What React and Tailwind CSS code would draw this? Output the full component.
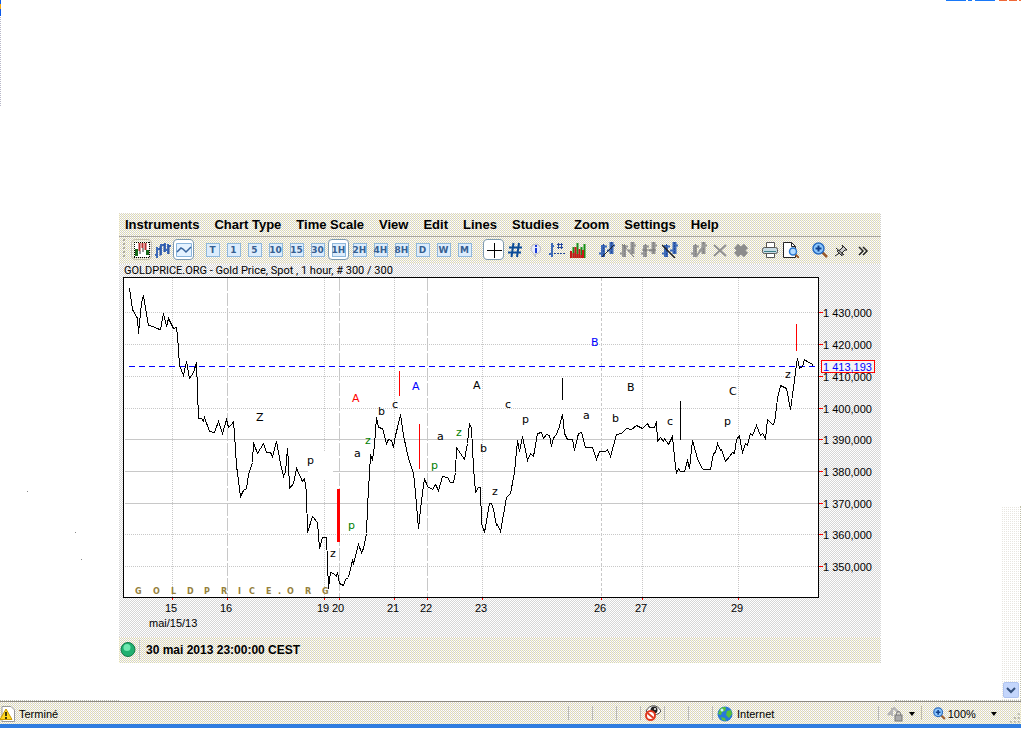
import { useState } from "react";
import clsx from "clsx";

const MENUS = ["Instruments", "Chart Type", "Time Scale", "View", "Edit", "Lines", "Studies", "Zoom", "Settings", "Help"];
const SCALES = ["T", "1", "5", "10", "15", "30", "1H", "2H", "4H", "8H", "D", "W", "M"];

const BEIGE = "bg-[conic-gradient(#ffffff_0_25%,#d0d0cc_0_50%,#ffffd8_0_75%,#dcd4c8_0)] bg-[length:2px_2px]";

const PRICES = [
  { label: "1 430,000", y: 312 },
  { label: "1 420,000", y: 344 },
  { label: "1 410,000", y: 376 },
  { label: "1 400,000", y: 408 },
  { label: "1 390,000", y: 439, solid: true },
  { label: "1 380,000", y: 471, solid: true },
  { label: "1 370,000", y: 503, solid: true },
  { label: "1 360,000", y: 534 },
  { label: "1 350,000", y: 566 },
];

const DAYS = [
  { label: "15", x: 172, dash: "1 1" },
  { label: "16", x: 227, dash: "13 2" },
  { label: "19", x: 324, dash: "1 1" },
  { label: "20", x: 339, dash: "13 2" },
  { label: "21", x: 394, dash: "1 1" },
  { label: "22", x: 427, dash: "13 2" },
  { label: "23", x: 482, dash: "1 1" },
  { label: "26", x: 601, dash: "3 2" },
  { label: "27", x: 642, dash: "1 1" },
  { label: "29", x: 738, dash: "1 1" },
];

// wave count annotations: text, x, baseline, colour
const WAVES = [
  ["Z", 256, 421, "#000"],
  ["p", 307, 464, "#000"],
  ["z", 330, 557, "#000"],
  ["p", 348, 529, "#008000"],
  ["A", 352, 402, "#f00"],
  ["z", 365, 444, "#008000"],
  ["a", 354, 457, "#000"],
  ["b", 378, 415, "#000"],
  ["c", 392, 408, "#000"],
  ["A", 412, 390, "#00f"],
  ["a", 437, 440, "#000"],
  ["p", 431, 469, "#008000"],
  ["z", 456, 436, "#008000"],
  ["A", 473, 389, "#000"],
  ["b", 480, 452, "#000"],
  ["z", 492, 495, "#000"],
  ["c", 505, 408, "#000"],
  ["p", 522, 423, "#000"],
  ["a", 583, 419, "#000"],
  ["B", 591, 346, "#00f"],
  ["b", 612, 422, "#000"],
  ["B", 627, 391, "#000"],
  ["c", 667, 425, "#000"],
  ["p", 724, 425, "#000"],
  ["C", 729, 395, "#000"],
  ["z", 785, 378, "#000"],
];

const LINE =
  "129,288 132,309 137,318 138,333 141,302 143,295 146,313 148,325 153,326 156,328 160,329 163,313 166,326 168,318 173,328 176,327 177,335 179,365 183,375 186,361 189,378 193,372 196,362 198,418 201,418 203,421 204,417 209,431 214,432 218,421 222,433 226,419 228,427 231,424 233,421 234,433 236,465 240,496 243,490 246,488 248,474 252,462 253,442 257,453 263,443 266,452 270,452 272,456 276,441 280,463 283,476 285,471 287,448 288,463 289,488 293,483 296,468 302,481 304,478 306,492 307,532 312,516 317,522 319,548 322,537 326,537 328,588 330,572 333,573 336,576 337,572 339,583 343,585 345,579 348,577 352,560 353,563 358,544 361,552 363,548 366,533 367,507 369,472 370,455 372,459 374,445 376,417 378,427 382,428 386,443 388,439 391,440 393,447 395,435 397,427 400,414 403,435 408,458 413,473 415,492 418,528 421,500 424,478 427,486 432,489 435,484 438,490 442,476 447,477 450,482 453,482 455,472 456,447 460,453 464,459 467,443 469,423 471,428 473,467 475,492 478,487 480,487 481,523 484,532 489,503 491,503 493,509 496,525 497,524 500,531 506,497 510,493 514,472 517,440 519,451 522,436 525,450 527,460 530,453 533,456 537,433 541,432 543,438 546,434 549,435 551,446 553,437 555,436 559,426 562,414 564,433 567,439 572,439 574,450 578,433 581,432 585,447 592,447 596,459 599,451 605,451 607,449 610,456 616,434 621,433 626,428 631,429 636,425 642,428 647,423 649,427 654,427 656,421 657,441 660,437 663,441 664,438 668,444 672,436 674,457 676,473 678,468 680,471 684,471 687,460 689,468 692,440 697,458 701,467 703,469 710,469 713,453 715,452 717,443 720,450 721,449 725,461 729,456 732,452 734,453 736,439 739,435 741,447 742,452 745,443 747,445 750,433 752,435 756,425 760,435 762,433 765,438 767,419 772,424 774,423 777,398 780,385 786,388 790,409 794,380 796,364 797,358 799,368 802,366 804,359 808,362 811,363 813,366";

function Icon({ children, size = 16 }) {
  return (
    <svg width={size} height={size} viewBox="0 0 16 16" fill="none" aria-hidden="true">
      {children}
    </svg>
  );
}

function Tool({ label, active, boxed, onClick, children }) {
  return (
    <button
      type="button"
      aria-label={label}
      onClick={onClick}
      className={clsx(
        "flex h-[21px] w-[21px] items-center justify-center rounded border",
        active ? "border-[#7d9ab0] bg-white" : boxed ? "border-[#c4beac]" : "border-transparent"
      )}
    >
      {children}
    </button>
  );
}

function Bars({ color, dark, children }) {
  return (
    <Icon>
      <path d="M4 3v12M12.500 0v12" stroke={color} strokeWidth="4" />
      <path d="M0 11.500h3M5 4.500h3M8 8.500h3M13 3.500h3" stroke={color} strokeWidth="2" />
      <path d="M4.500 2v13M12.500 0v12" stroke={dark} strokeDasharray="2 1" />
      {children}
    </Icon>
  );
}

const BLUE = "#3c6ab8";
const NAVY = "#24489a";
const GRAY = "#969696";
const DIM = "#828282";

function Magnifier({ size }) {
  return (
    <Icon size={size}>
      <path d="M10 10l5 5" stroke="#9a5a2a" strokeWidth="2.500" />
      <circle cx="6.500" cy="6.500" r="5.500" fill="#8cc8ff" stroke="#2a6cc0" strokeWidth="1.500" />
      <path d="M6.500 3.500v6M3.500 6.500h6" stroke="#10408c" strokeWidth="2" />
    </Icon>
  );
}

function Toolbar() {
  const [scale, setScale] = useState("1H");
  return (
    <div className={`flex h-[27px] items-center gap-2 pb-[2px] pl-1 ${BEIGE}`}>
      <div className="flex">
        <span className="mr-[6px] h-[18px] border-l-2 border-dotted border-[#b0aea0]" />
        <Tool label="Candles" boxed>
          <Icon>
            <path d="M1 1h14v14H1z" fill="#fff" />
            <path d="M0 .5h16M0 15.500h16M.5 0v16M15.500 0v16" stroke="#000" strokeDasharray="1 1" />
            <path d="M2.500 7v7M13.500 8v5" stroke="#186818" strokeWidth="3" />
            <path d="M5.500 1v8M8.500 1v5M11.500 1v7" stroke="#b83030" strokeWidth="2" />
            <path d="M6 9v3M9 6v4" stroke="#333" />
          </Icon>
        </Tool>
        <Tool label="OHLC bars">
          <Icon>
            <path d="M2 5v11M0 13h2M2 7h3M6 2v11M6 3h4M10 1v9M10 8h2M13 2v10M13 4h3" stroke={BLUE} strokeWidth="2" />
            <path d="M5 4v10M9 2v8M14 3v9" stroke={NAVY} />
          </Icon>
        </Tool>
        <Tool label="Line" active>
          <Icon>
            <path d="M.5 1.500h15v13H.5z" fill="#e4f2ff" stroke="#88b4dc" />
            <path d="M1 10l4-4 2 1 3 3 5-5" stroke="#36639c" strokeWidth="1.500" />
          </Icon>
        </Tool>
      </div>
      <div className="flex">
        {SCALES.map((s) => (
          <Tool key={s} label={`Scale ${s}`} active={scale === s} onClick={() => setScale(s)}>
            <span className="flex h-[14px] w-[14px] items-center justify-center border border-[#8fb8dc] bg-[#dcecfc] font-['DejaVu_Sans',sans-serif] text-[9px] leading-3 font-bold text-[#365f92]">
              {s}
            </span>
          </Tool>
        ))}
      </div>
      <div className="flex">
        <Tool label="Crosshair" active>
          <Icon>
            <path d="M8.500 1v15M1 8.500h15" stroke="#000" shapeRendering="crispEdges" />
          </Icon>
        </Tool>
        <Tool label="Grid">
          <Icon>
            <path d="M6.500 1l-2 14M12 1l-2 14M2 5.500h13M1 10.500h13" stroke="#0c4c98" strokeWidth="2" />
          </Icon>
        </Tool>
        <Tool label="Info">
          <Icon>
            <path d="M8 2a5 5 0 1 1-1 10l1 3-3-4A5 5 0 0 1 8 2z" fill="#e8ecf8" stroke="#b8b8c0" />
            <path d="M8 3v2M8 6v4M7 10h2" stroke="#1838d8" strokeWidth="2" />
          </Icon>
        </Tool>
        <Tool label="Levels">
          <Icon>
            <path d="M3 1v14M0 12h3M3 4h2" stroke={BLUE} strokeWidth="2" />
            <path d="M9.500 1v6M12.500 1v6M8 2.500h6M8 5.500h6" stroke={NAVY} />
            <path d="M5 11.500h11" stroke={NAVY} strokeDasharray="2 1" />
          </Icon>
        </Tool>
        <Tool label="Volume">
          <Icon>
            <path d="M3.500 5v11M7.500 1v15M11.500 5v11M14.500 2v14" stroke="#189018" strokeWidth="2" />
            <path d="M1 9v7M5.500 5v11M9.500 7v9M13 8v8" stroke="#c81818" strokeWidth="2" />
            <path d="M3.500 11v5M7.500 12v4M11.500 13v3" stroke="#c81818" strokeWidth="2" />
          </Icon>
        </Tool>
      </div>
      <div className="flex">
        <Tool label="Trend line">
          <Bars color={BLUE} dark={NAVY}>
            <path d="M3 15L15 3" stroke="#222" />
          </Bars>
        </Tool>
        <Tool label="Move line">
          <Bars color={GRAY} dark={DIM}>
            <path d="M2 2l12 13" stroke="#777" />
          </Bars>
        </Tool>
        <Tool label="Horizontal line">
          <Bars color={GRAY} dark={DIM}>
            <path d="M1 8h14" stroke="#777" />
          </Bars>
        </Tool>
        <Tool label="Remove line">
          <Bars color={BLUE} dark={NAVY}>
            <path d="M0 3l13 13" stroke="#222" strokeWidth="1.500" />
          </Bars>
        </Tool>
      </div>
      <div className="flex">
        <Tool label="Edit line">
          <Bars color={GRAY} dark={DIM}>
            <path d="M5 15l8-12" stroke="#999" strokeWidth="2" />
          </Bars>
        </Tool>
        <Tool label="Delete">
          <Icon>
            <path d="M2 3l12 11M14 3L2 14" stroke="#909090" strokeWidth="2" />
          </Icon>
        </Tool>
        <Tool label="Delete all">
          <Icon>
            <path d="M3 4l10 9M13 4L3 13" stroke="#8c8c8c" strokeWidth="6" />
          </Icon>
        </Tool>
      </div>
      <div className="flex">
        <Tool label="Print">
          <Icon>
            <path d="M4.500.5h8v5h-8z" fill="#fff" stroke="#555" />
            <rect x=".5" y="5.500" width="15" height="6" rx="2" fill="#c8dce4" stroke="#555" />
            <path d="M2 9.500h12" stroke="#3c8088" />
            <path d="M4.500 11.500h8v4h-8z" fill="#fff" stroke="#555" />
          </Icon>
        </Tool>
        <Tool label="Print preview">
          <Icon>
            <path d="M.5.5h8l4 4v11H.5z" fill="#fff" stroke="#222" />
            <path d="M8.500.5v4h4" stroke="#222" />
            <path d="M12 12l4 4" stroke="#9a5a2a" strokeWidth="2" />
            <circle cx="10" cy="9.500" r="3.500" fill="#b4dcff" stroke="#2a78d0" strokeWidth="1.500" />
          </Icon>
        </Tool>
      </div>
      <div className="flex">
        <Tool label="Zoom in">
          <Magnifier size={16} />
        </Tool>
        <Tool label="Detach">
          <Icon>
            <path d="M9 3l5 5-2 0-3 3 0 3-5-5 3-1 3-3z" fill="#ccc" stroke="#222" />
            <path d="M6.500 11L2 14M3 6l8 7" stroke="#222" />
          </Icon>
        </Tool>
        <Tool label="More">
          <Icon>
            <path d="M5 5l4 4-4 4M9 5l4 4-4 4" stroke="#222" strokeWidth="1.500" />
          </Icon>
        </Tool>
      </div>
    </div>
  );
}

function PriceChart() {
  return (
    <svg viewBox="119 277 762 360" className="block h-auto w-full text-[11px]" role="img" aria-label="Gold price, hourly">
      <rect x="123.500" y="277.500" width="695" height="320" fill="#fff" />
      <g shapeRendering="crispEdges" stroke="#c8c8c8" fill="none">
        {PRICES.map((p) => (
          <path key={p.label} d={`M125 ${p.y + 0.5}H818`} strokeDasharray={p.solid ? undefined : "1 1"} />
        ))}
        {DAYS.map((d) => (
          <path key={d.label} d={`M${d.x + 0.5} 278V597`} strokeDasharray={d.dash} />
        ))}
      </g>
      <rect x="308" y="452" width="25" height="28" fill="#fff" />
      <g shapeRendering="crispEdges" fill="none">
        <path d="M129 366.500H815" stroke="#00f" strokeDasharray="6 4" />
        <polyline points={LINE} transform="translate(.5 .5)" stroke="#000" />
        <rect x="123.500" y="277.500" width="695" height="320" stroke="#000" />
        <path d="M399.500 371V396M419.500 424V469M796.500 324V351" stroke="#f00" />
        <path d="M338.500 489V542" stroke="#f00" strokeWidth="3" />
        <path d="M562.500 378V400M680.500 401V440" stroke="#000" />
        {PRICES.map((p) => (
          <path key={p.label} d={`M819 ${p.y + 0.5}h4`} stroke="#f00" />
        ))}
        {DAYS.map((d) => (
          <path key={d.label} d={`M${d.x + 0.5} 598v2`} stroke="#f00" />
        ))}
      </g>
      {PRICES.map((p) => (
        <text key={p.label} x="823" y={p.y + 5}>
          {p.label}
        </text>
      ))}
      <rect x="821.500" y="360.500" width="53" height="12" fill="#f4f4f4" stroke="#f00" shapeRendering="crispEdges" />
      <text x="823" y="371" fill="#00f">
        1 413,193
      </text>
      {DAYS.map((d) => (
        <text key={d.label} x={d.x - 1} y="612" textAnchor="middle">
          {d.label}
        </text>
      ))}
      <text x="149" y="627">
        mai/15/13
      </text>
      <g className="font-['DejaVu_Sans',sans-serif]">
        {WAVES.map(([t, x, y, fill]) => (
          <text key={`${t}${x}`} x={x} y={y} fill={fill}>
            {t}
          </text>
        ))}
        <text x="135 153 171 187 204 221 238 249 266 278 287 305 322" y="594" fill="#94803c" fontSize="8" fontWeight="bold">
          GOLDPRICE.ORG
        </text>
      </g>
    </svg>
  );
}

function ChartPanel() {
  return (
    <section className="w-full max-w-[762px]">
      <nav className={`flex h-6 items-center gap-[15px] border-b border-[#a8a69c] pl-[6px] text-[13px] leading-4 font-bold ${BEIGE}`}>
        {MENUS.map((m) => (
          <button key={m} type="button">
            {m}
          </button>
        ))}
      </nav>
      <Toolbar />
      <div className="bg-[conic-gradient(#fff_0_25%,#d6d6d6_0_50%,#fff_0_75%,#d6d6d6_0)] bg-[length:2px_2px]">
        <p className="pl-[5px] font-[Roboto,sans-serif] text-[11px] leading-[13px]">GOLDPRICE.ORG - Gold Price, Spot , 1 hour, # 300 / 300</p>
        <PriceChart />
      </div>
      <div className={`flex h-[26px] items-center pl-[1px] text-[12px] font-bold ${BEIGE}`}>
        <Icon>
          <circle cx="8" cy="7.500" r="7" fill="#20b070" stroke="#107848" />
          <circle cx="7" cy="5.500" r="3.500" fill="#70e8b0" />
        </Icon>
        <span className="ml-[3px] h-5 border-l border-[#c8c8c0]" />
        <span className="ml-[6px]">30 mai 2013 23:00:00 CEST</span>
      </div>
    </section>
  );
}

function Caret() {
  return (
    <svg width="6" height="4" viewBox="0 0 6 4" aria-hidden="true">
      <path d="M0 0h6L3 4z" />
    </svg>
  );
}

function StatusBar() {
  return (
    <footer className={`flex h-[27px] items-stretch border-t border-b-4 border-t-[#8c8a80] border-b-[#2f7ce0] text-[11px] leading-4 ${BEIGE}`}>
      <div className="flex flex-1 items-center gap-[3px] pt-[2px]">
        <Icon>
          <path d="M2 .5h9l3.500 3.500v11.500H2z" fill="#fff" stroke="#999" />
          <path d="M6 3l6 10.500H0z" fill="#ffd820" stroke="#c89800" />
          <path d="M6 6v4M6 11v2" stroke="#000" strokeWidth="1.500" />
        </Icon>
        Terminé
      </div>
      {[0, 1, 2].map((i) => (
        <span key={i} className="my-1 w-6 border-l border-[#bcbab0]" />
      ))}
      <span className="my-1 flex w-6 items-center border-l border-[#bcbab0] pl-1">
        <Icon>
          <path d="M1 6c4-7 11-7 15 0-3 5-10 5-15 0z" fill="#fff" stroke="#444" />
          <circle cx="9" cy="5" r="3.500" fill="#222" />
          <circle cx="10" cy="4" r="1" fill="#fff" />
          <circle cx="5.500" cy="10.500" r="4.500" fill="#fff" stroke="#e03820" strokeWidth="2" />
          <path d="M2.500 8l6 5" stroke="#e03820" strokeWidth="2" />
        </Icon>
      </span>
      <span className="my-1 w-6 border-l border-[#bcbab0]" />
      <span className="my-1 w-6 border-l border-[#bcbab0]" />
      <div className="my-1 flex w-[166px] items-center gap-1 border-l border-[#bcbab0] pt-px pl-1">
        <Icon>
          <circle cx="8" cy="8" r="7.500" fill="#2878d8" />
          <path d="M3 3c3-3 6-2 6-1L8 5 5 6 4 9 1 8zM10 5l4-1 1 4-3 4-3-3zM4 11l4 1 1 3-4-1z" fill="#58c038" />
          <circle cx="5" cy="4" r="1.500" fill="#c8f0ff" />
        </Icon>
        Internet
      </div>
      <button type="button" aria-label="Security" className="my-1 flex w-[43px] items-center gap-[6px] border-l border-[#bcbab0] pt-px pl-2">
        <Icon>
          <path d="M1 9l6-7 5 5M3 9V6M5 2v8" stroke="#b4b4b4" strokeWidth="2" />
          <rect x="8" y="9" width="7" height="6" fill="#aaa" stroke="#777" />
          <path d="M9.500 9V7.500a2 2 0 0 1 4 0V9" stroke="#777" />
        </Icon>
        <Caret />
      </button>
      <button type="button" className="my-1 flex w-[100px] items-center border-l border-[#bcbab0] pt-px pl-[11px]">
        <Magnifier size={13} />
        <span className="ml-[2px] w-[45px] text-left">100%</span>
        <Caret />
        <svg width="12" height="12" viewBox="0 0 12 12" className="mt-2 ml-3" fill="#b8b6a8" aria-hidden="true">
          <path d="M9 1h2v2H9zM9 5h2v2H9zM9 9h2v2H9zM5 5h2v2H5zM5 9h2v2H5zM1 9h2v2H1z" />
        </svg>
      </button>
    </footer>
  );
}

// leftover pixels of the surrounding window
function Specks() {
  return (
    <svg className="pointer-events-none absolute top-0 left-0" width="100" height="570" shapeRendering="crispEdges" aria-hidden="true">
      <path d="M.5 0v4M.5 9v7" stroke="#0c58e8" />
      <path d="M.5 4v5" stroke="#f0a818" />
      <path d="M.5 17v90" stroke="#b8b8c8" strokeDasharray="1 1" />
      <path d="M27 491.500h1M75 532.500h1M81 559.500h1" stroke="#888" />
    </svg>
  );
}

export default function App() {
  return (
    <div className="relative flex min-h-screen flex-col bg-white pr-[3px] pb-[10px] font-['Liberation_Sans',Arial,sans-serif] text-black">
      <Specks />
      <svg className="absolute top-0 right-[3px]" width="75" height="1" shapeRendering="crispEdges" aria-hidden="true">
        <path d="M0 .5h20M22 .5h4M29 .5h20" stroke="#1878f8" />
        <path d="M53 .5h22" stroke="#f06838" strokeDasharray="8 2" />
      </svg>
      <main className="flex flex-1">
        <div className="flex-1 pt-[213px] pl-[119px]">
          <ChartPanel />
        </div>
        <div className="mt-[506px] flex w-[19px] flex-col justify-end border-r border-dotted border-[#c0bea8] bg-[conic-gradient(#fff_0_50%,#e8e6e0_0_75%,#fff_0)] bg-[length:2px_2px] pb-[2px]">
          <button type="button" aria-label="Scroll down" className="ml-px flex h-4 w-4 items-center justify-center rounded-xs border border-[#b0c4f0] bg-[#c4d6fc]">
            <svg width="10" height="7" viewBox="0 0 10 7" fill="none" aria-hidden="true">
              <path d="M1 1l4 4 4-4" stroke="#34507c" strokeWidth="2" />
            </svg>
          </button>
        </div>
      </main>
      <div className="flex justify-between">
        <span className="w-[119px] border-t border-dotted border-[#bcbcb0]" />
        <span className="w-[126px] border-t border-dotted border-[#bcbcb0]" />
      </div>
      <StatusBar />
    </div>
  );
}
